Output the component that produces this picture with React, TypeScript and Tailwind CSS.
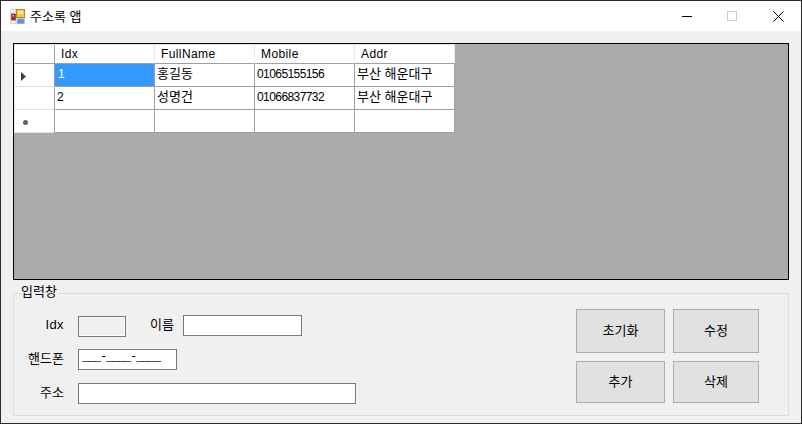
const font = { fontFamily: '"Liberation Sans", "Noto Sans CJK KR", sans-serif' }

const columns = ["Idx", "FullName", "Mobile", "Addr"]
const rows = [
  ["1", "홍길동", "01065155156", "부산 해운대구"],
  ["2", "성명건", "01066837732", "부산 해운대구"],
]

function AppIcon() {
  return (
    <svg width="15" height="15" viewBox="0 0 15 15" className="shrink-0">
      <rect x="0" y="0" width="15" height="15" fill="#d8d8d8" />
      <rect x="1" y="1" width="4" height="3" fill="#f4f4f4" />
      <rect x="1" y="12" width="4" height="2" fill="#f4f4f4" />
      <rect x="1.5" y="5" width="4" height="6" fill="#b82020" stroke="#903030" strokeWidth="0.6" />
      <rect x="2.5" y="6" width="1.5" height="1.5" fill="#f0c0a0" />
      <rect x="6.5" y="0.5" width="8" height="8" fill="#f8c840" stroke="#b08a20" />
      <rect x="8" y="2" width="5" height="3" fill="#fde68a" />
      <rect x="7.5" y="10" width="6.5" height="4.5" fill="#5c8fe0" stroke="#8fb0e0" strokeWidth="0.8" />
    </svg>
  )
}

function TitleBar() {
  return (
    <div className="h-[30px] bg-white flex items-center pl-[9px] shrink-0">
      <AppIcon />
      <span className="ml-[5px] text-[13px] text-black leading-none">주소록 앱</span>
      <div className="ml-auto flex items-center">
        <svg width="10" height="10" viewBox="0 0 10 10" className="mr-[35px]">
          <path d="M0 5.5H10" stroke="#000" strokeWidth="1" />
        </svg>
        <svg width="10" height="10" viewBox="0 0 10 10" className="mr-[36px]">
          <rect x="0.5" y="0.5" width="9" height="9" fill="none" stroke="#cccccc" />
        </svg>
        <svg width="11" height="11" viewBox="0 0 11 11" className="mr-[17px]">
          <path d="M0.5 0.5L10.5 10.5M10.5 0.5L0.5 10.5" stroke="#000" strokeWidth="1" />
        </svg>
      </div>
    </div>
  )
}

function DataGrid() {
  return (
    <div className="h-[237px] ml-[12px] mr-[12px] mt-[12px] border border-black bg-[#ababab] shrink-0">
      <div className="w-[441px] border-t border-l border-[#e3e3e3]">
        <div className="flex h-[19px] w-[440px] bg-white">
          <div className="w-[40px] border-r border-b border-r-[#a0a0a0] border-b-[#a0a0a0]" />
          {columns.map((c) => (
            <div key={c} className="w-[100px] pl-[6px] border-r border-b border-r-[#e8e8e8] border-b-[#a0a0a0] text-[12px] tracking-[0.4px] leading-[18px] text-black">
              {c}
            </div>
          ))}
        </div>
        {rows.map((row, i) => (
          <div key={row[0]} className="flex h-[23px] w-[440px] bg-white">
            <div className="w-[40px] flex items-center pl-[6px] pt-[3px] border-r border-b border-r-[#a0a0a0] border-b-[#e0e0e0]">
              {i === 0 && (
                <svg width="5" height="9" viewBox="0 0 5 9">
                  <path d="M0 0L5 4.5L0 9Z" fill="#404040" />
                </svg>
              )}
            </div>
            {row.map((v, j) => (
              <div
                key={j}
                className={
                  i === 0 && j === 0
                    ? "w-[100px] pl-[3px] pt-[1px] border-r border-b border-r-[#a0a0a0] border-b-[#a0a0a0] bg-[#3399ff] text-white text-[12px] tracking-[-0.58px] leading-[18px]"
                    : j === 0 || j === 2
                      ? "w-[100px] pl-[2px] pt-[1px] border-r border-b border-[#a0a0a0] text-black text-[12px] tracking-[-0.58px] leading-[18px]"
                      : "w-[100px] pl-[2px] pt-[1px] border-r border-b border-[#a0a0a0] text-black text-[13px] leading-[18px]"
                }
              >
                {v}
              </div>
            ))}
          </div>
        ))}
        <div className="flex h-[23px] w-[440px] bg-white">
          <div className="w-[40px] flex items-center pl-[8px] pt-[3px] border-r border-b border-r-[#a0a0a0] border-b-[#e0e0e0]">
            <span className="w-[5px] h-[5px] rounded-full bg-[#606060]" />
          </div>
          {columns.map((c) => (
            <div key={c} className="w-[100px] border-r border-b border-[#a0a0a0]" />
          ))}
        </div>
      </div>
    </div>
  )
}

function Label({ text, width, className = "" }: { text: string; width: string; className?: string }) {
  return <span className={`${width} ${className} text-right text-[13px] leading-none text-black`}>{text}</span>
}

function GroupBox() {
  return (
    <div className="relative h-[123px] mx-[12px] mt-[13px] border border-[#dcdcdc] flex shrink-0">
      <span className="absolute left-[6px] top-[-9px] px-[1px] bg-[#f0f0f0] text-[13px] leading-[14px] text-black">입력창</span>
      <div className="flex flex-col pt-[21px]">
        <div className="flex items-start">
          <Label text="Idx" width="w-[50px]" className="pt-[3px] tracking-[0.4px]" />
          <div className="ml-[14px] mt-[1px] w-[48px] h-[21px] border border-[#7a7a7a] bg-[#f0f0f0] shadow-[inset_-1px_-1px_0_#ffffff]" />
          <Label text="이름" width="w-[48px]" className="pt-[3px]" />
          <div className="ml-[9px] w-[119px] h-[21px] border border-[#7a7a7a] bg-white" />
        </div>
        <div className="flex items-start mt-[12px]">
          <Label text="핸드폰" width="w-[50px]" className="pt-[3px]" />
          <div className="ml-[14px] w-[99px] h-[21px] border border-[#7a7a7a] bg-white pl-[3px] text-[12px] leading-[14px] text-black" style={{ fontFamily: '"Liberation Mono", monospace', letterSpacing: "-1.2px" }}>
            ___-____-____
          </div>
        </div>
        <div className="flex items-start mt-[13px]">
          <Label text="주소" width="w-[50px]" className="pt-[3px]" />
          <div className="ml-[14px] w-[278px] h-[21px] border border-[#7a7a7a] bg-white" />
        </div>
      </div>
      <div className="ml-auto mr-[29px] pt-[15px] grid grid-cols-[89px_86px] grid-rows-[44px_42px] gap-x-[8px] gap-y-[8px] content-start">
        {["초기화", "수정", "추가", "삭제"].map((b) => (
          <button key={b} className="border border-[#adadad] bg-[#e1e1e1] text-[13px] text-black">
            {b}
          </button>
        ))}
      </div>
    </div>
  )
}

export default function App() {
  return (
    <div className="w-[802px] h-[424px] border border-[#2b2b2b] bg-[#f0f0f0] flex flex-col overflow-hidden" style={font}>
      <TitleBar />
      <DataGrid />
      <GroupBox />
    </div>
  )
}
